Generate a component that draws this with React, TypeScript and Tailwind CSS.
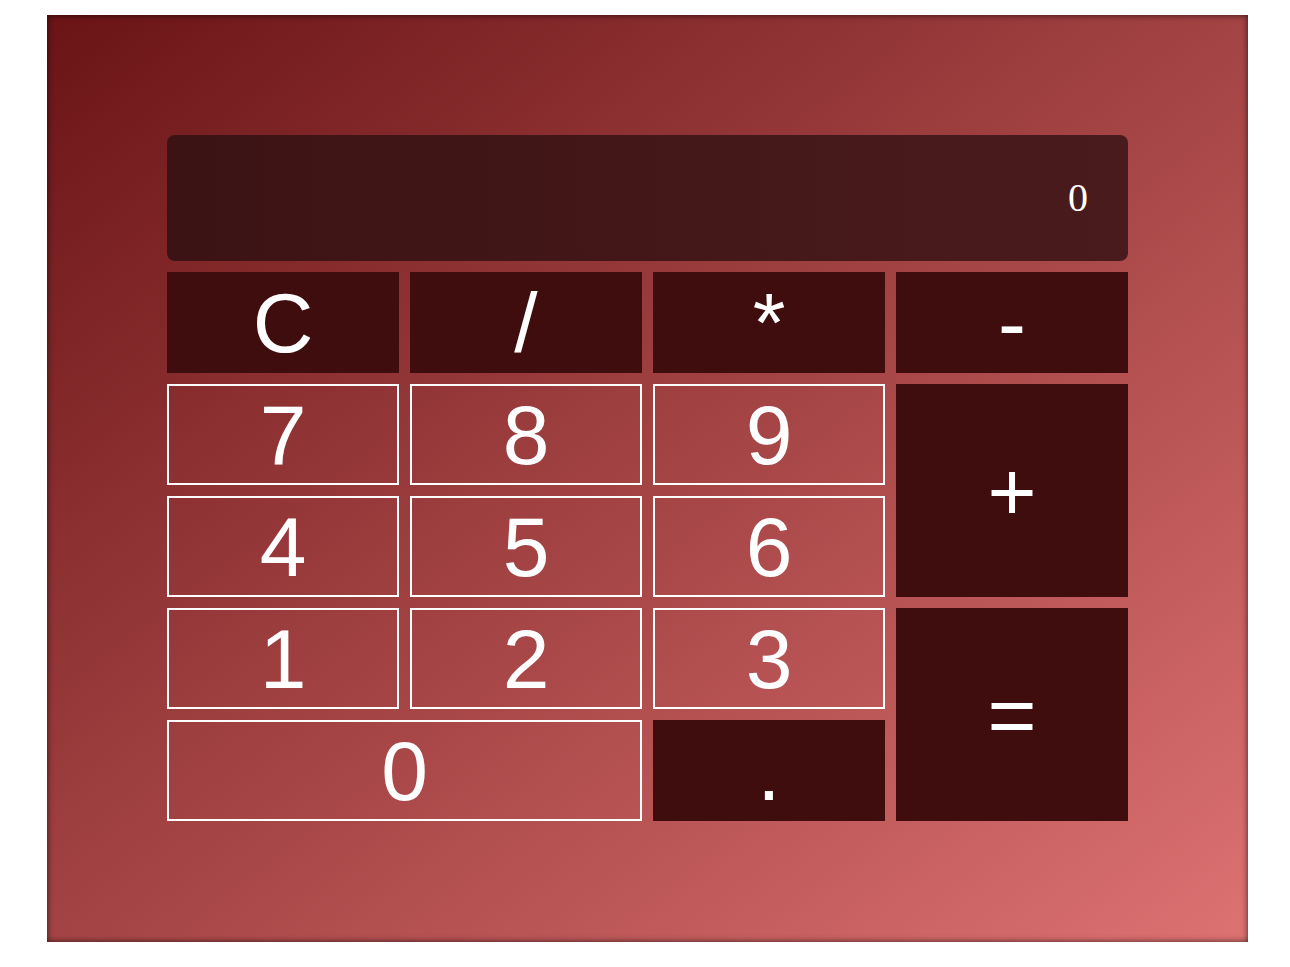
import React from "react";

const dark = "bg-[#3f0d0d] text-white";
const light = "border-2 border-white text-white bg-transparent";

export default function App() {
  const btn =
    "flex items-center justify-center text-[84px] leading-none font-['Liberation_Sans',Arial,sans-serif]";
  return (
    <div className="w-[1290px] h-[967px] bg-white pt-[15px] pl-[47px]">
      <div className="w-[1201px] h-[927px] p-[120px] flex flex-col gap-[11px] bg-[linear-gradient(to_bottom_right,#6a1416,#dd7272)] shadow-[inset_0_0_6px_rgba(0,0,0,0.7)]">
        <div className="h-[126px] rounded-[8px] bg-[linear-gradient(to_right,#3c1314,#4a1b1c)] flex items-center justify-end pr-[40px]">
          <span className="text-white text-[40px] font-['Liberation_Serif','Times_New_Roman',serif]">0</span>
        </div>
        <div className="grid grid-cols-[232px_232px_232px_232px] grid-rows-[101px_101px_101px_101px_101px] gap-[11px] justify-between">
          <div className={`${btn} ${dark}`}>C</div>
          <div className={`${btn} ${dark}`}>/</div>
          <div className={`${btn} ${dark}`}>*</div>
          <div className={`${btn} ${dark}`}>-</div>
          <div className={`${btn} ${light}`}>7</div>
          <div className={`${btn} ${light}`}>8</div>
          <div className={`${btn} ${light}`}>9</div>
          <div className={`${btn} ${dark} row-span-2`}>+</div>
          <div className={`${btn} ${light}`}>4</div>
          <div className={`${btn} ${light}`}>5</div>
          <div className={`${btn} ${light}`}>6</div>
          <div className={`${btn} ${light}`}>1</div>
          <div className={`${btn} ${light}`}>2</div>
          <div className={`${btn} ${light}`}>3</div>
          <div className={`${btn} ${dark} row-span-2`}>=</div>
          <div className={`${btn} ${light} col-span-2`}>0</div>
          <div className={`${btn} ${dark}`}>.</div>
        </div>
      </div>
    </div>
  );
}
